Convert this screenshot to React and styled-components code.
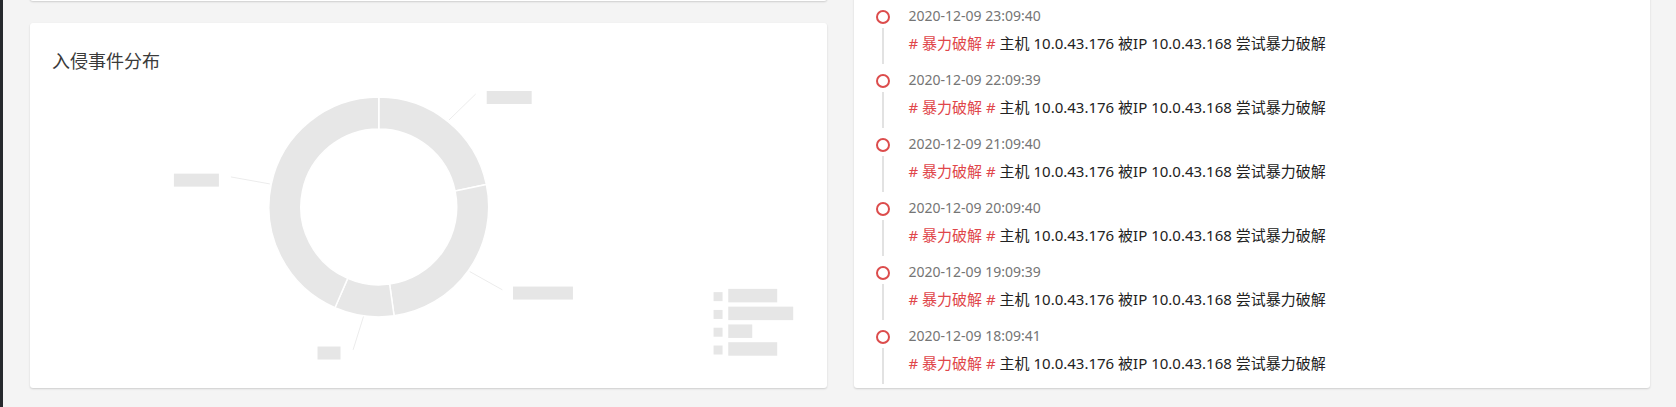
import React from "react";
import styled, { createGlobalStyle } from "styled-components";

const GlobalStyle = createGlobalStyle`
  html, body {
    margin: 0;
    padding: 0;
    background: #f4f4f4;
    overflow: hidden;
  }
  body {
    font-family: "Noto Sans", "Noto Sans CJK SC", sans-serif;
  }
`;

const Shell = styled.div`
  display: flex;
  height: 407px;
  overflow: hidden;
`;

const Sidebar = styled.aside`
  width: 3px;
  flex: none;
  background: #26292d;
`;

const Main = styled.main`
  flex: 1;
  background: #f4f4f4;
  padding: 0 26px 0 27px;
  overflow: hidden;
`;

// the page is scrolled a little, the top of the grid sits above the viewport
const Grid = styled.div`
  display: grid;
  grid-template-columns: 1fr 1fr;
  column-gap: 27px;
  margin-top: -10px;
`;

const Column = styled.div`
  display: flex;
  flex-direction: column;
  gap: 22px;
`;

const Card = styled.section`
  background: #fff;
  border-radius: 3px;
  box-shadow: 0 1px 2px rgba(0, 0, 0, 0.16);
  box-sizing: border-box;
`;

const TopCard = styled(Card)`
  height: 11px;
`;

const ChartCard = styled(Card)`
  height: 365px;
  padding: 24px 24px 24px 22px;
  display: flex;
  flex-direction: column;
`;

const Title = styled.h3`
  margin: 0;
  font-family: "Noto Sans CJK SC", sans-serif;
  font-size: 18px;
  line-height: 27px;
  font-weight: 400;
  color: #3a3a3a;
`;

const ChartSvg = styled.svg`
  display: block;
  flex: 1;
  width: 100%;
`;

const TimelineCard = styled(Card)`
  padding: 0 0 4px 22px;
`;

// tail of the entry scrolled out above
const LeadTail = styled.span`
  display: block;
  width: 2px;
  height: 10px;
  margin-left: 6px;
  background: #e2e2e2;
`;

const Item = styled.div`
  display: flex;
  height: 64px;
`;

const Rail = styled.div`
  width: 14px;
  flex: none;
  display: flex;
  flex-direction: column;
  align-items: center;
  padding-top: 10px;
`;

const Dot = styled.span`
  width: 14px;
  height: 14px;
  box-sizing: border-box;
  border: 2px solid #dc4c4c;
  border-radius: 50%;
  background: #fff;
  flex: none;
`;

const Tail = styled.span`
  flex: 1;
  width: 2px;
  margin-top: 4px;
  background: #e2e2e2;
`;

const Body = styled.div`
  margin-left: 19px;
  padding-top: 5px;
`;

const Time = styled.div`
  font-size: 14px;
  line-height: 22px;
  color: #757575;
`;

const Message = styled.div`
  margin-top: 5px;
  font-size: 15px;
  line-height: 22px;
  color: #222;
  white-space: nowrap;
`;

const Tag = styled.span`
  color: #e0464a;
`;

const events = [
  "2020-12-09 23:09:40",
  "2020-12-09 22:09:39",
  "2020-12-09 21:09:40",
  "2020-12-09 20:09:40",
  "2020-12-09 19:09:39",
  "2020-12-09 18:09:41",
];

const CX = 327;
const CY = 133;
const R = 110;
const r = 78;

const pt = (a, rad) => {
  const t = (a * Math.PI) / 180;
  return [CX + rad * Math.sin(t), CY - rad * Math.cos(t)];
};

const arc = (a0, a1) => {
  const large = a1 - a0 > 180 ? 1 : 0;
  const [x0, y0] = pt(a0, R);
  const [x1, y1] = pt(a1, R);
  const [x2, y2] = pt(a1, r);
  const [x3, y3] = pt(a0, r);
  return `M${x0} ${y0} A${R} ${R} 0 ${large} 1 ${x1} ${y1} L${x2} ${y2} A${r} ${r} 0 ${large} 0 ${x3} ${y3} Z`;
};

const segments = [
  { from: 0, to: 78.2, line: [397.3, 46, 424, 20], label: [435, 17, 45] },
  { from: 78.2, to: 172, line: [418, 197.7, 450.7, 216], label: [461.3, 212.7, 60] },
  { from: 172, to: 203.5, line: [311.7, 242.7, 301.3, 276], label: [265.7, 272.7, 23] },
  { from: 203.5, to: 360, line: [218, 110, 179, 103], label: [122, 99.7, 45] },
];

const legend = [49, 65, 24, 49];

const DonutChart = () => (
  <ChartSvg viewBox="0 0 751 290" preserveAspectRatio="xMinYMin meet">
    {segments.map((s, i) => (
      <g key={i}>
        <path d={arc(s.from, s.to)} fill="#e7e7e7" stroke="#fff" strokeWidth="1.5" />
        <line
          x1={s.line[0]}
          y1={s.line[1]}
          x2={s.line[2]}
          y2={s.line[3]}
          stroke="#ececec"
          strokeWidth="1"
        />
        <rect x={s.label[0]} y={s.label[1]} width={s.label[2]} height="13" fill="#e6e6e6" />
      </g>
    ))}
    {legend.map((w, i) => (
      <g key={i}>
        <rect x="662" y={218.3 + i * 17.8} width="9" height="9" fill="#e6e6e6" />
        <rect x="676.7" y={215 + i * 17.8} width={w} height="13.5" fill="#e6e6e6" />
      </g>
    ))}
  </ChartSvg>
);

export default function App() {
  return (
    <>
      <GlobalStyle />
      <Shell>
        <Sidebar />
        <Main>
          <Grid>
            <Column>
              <TopCard />
              <ChartCard>
                <Title>入侵事件分布</Title>
                <DonutChart />
              </ChartCard>
            </Column>
            <TimelineCard>
              <LeadTail />
              {events.map((t) => (
                <Item key={t}>
                  <Rail>
                    <Dot />
                    <Tail />
                  </Rail>
                  <Body>
                    <Time>{t}</Time>
                    <Message>
                      <Tag># 暴力破解 #</Tag> 主机 10.0.43.176 被IP 10.0.43.168 尝试暴力破解
                    </Message>
                  </Body>
                </Item>
              ))}
            </TimelineCard>
          </Grid>
        </Main>
      </Shell>
    </>
  );
}
